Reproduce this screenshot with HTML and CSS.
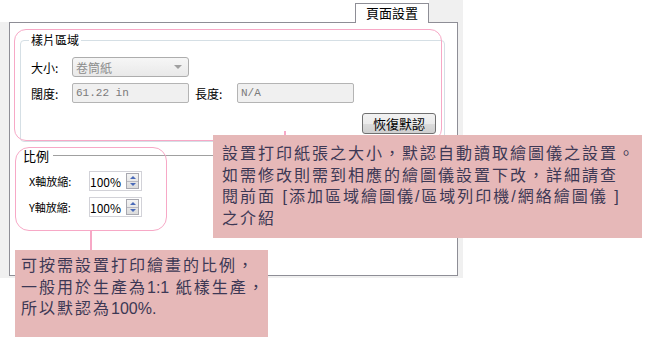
FILE: index.html
```html
<!DOCTYPE html>
<html lang="zh-Hant">
<head>
    <meta charset="UTF-8">
    <title>頁面設置</title>
    <link rel="stylesheet" href="styles.css">
</head>
<body>
    <div class="dialog">
        <div class="tabbar">
            <div class="tab-space"></div>
            <div class="tab">頁面設置</div>
            <div class="tab-rest"></div>
        </div>
        <div class="shell">
            <div class="panel">
                <div class="group">
                    <div class="group-title">樣片區域</div>
                    <div class="row first">
                        <span class="label">大小:</span>
                        <div class="combo">
                            <span>卷筒紙</span>
                            <span class="arrow"></span>
                        </div>
                    </div>
                    <div class="row">
                        <span class="label">闊度:</span>
                        <div class="field">61.22 in</div>
                        <span class="label second">長度:</span>
                        <div class="field">N/A</div>
                    </div>
                    <div class="row right">
                        <button class="btn">恢復默認</button>
                    </div>
                </div>

                <div class="scale">
                    <div class="scale-title">
                        <span>比例</span>
                        <span class="rule"></span>
                    </div>
                    <div class="row first scale-row">
                        <span class="label wide">X軸放縮:</span>
                        <div class="spin">
                            <span>100%</span>
                            <div class="spin-btns">
                                <span class="up"></span>
                                <span class="down"></span>
                            </div>
                        </div>
                    </div>
                    <div class="row scale-row">
                        <span class="label wide">Y軸放縮:</span>
                        <div class="spin">
                            <span>100%</span>
                            <div class="spin-btns">
                                <span class="up"></span>
                                <span class="down"></span>
                            </div>
                        </div>
                    </div>
                </div>
            </div>
        </div>
    </div>

    <!-- annotations drawn over the dialog -->
    <div class="mark mark-area"></div>
    <div class="mark mark-scale"></div>
    <div class="link link-scale"></div>
    <div class="link link-area"></div>

    <div class="note note-area">
        設置打印紙張之大小，默認自動讀取繪圖儀之設置。<br>
        如需修改則需到相應的繪圖儀設置下改，詳細請查<br>
        閱前面 [添加區域繪圖儀/區域列印機/網絡繪圖儀 ]<br>
        之介紹
    </div>
    <div class="note note-scale">
        可按需設置打印繪畫的比例，<br>
        一般用於生產為<span class="latin">1:1</span> 紙樣生產，<br>
        所以默認為<span class="latin">100%.</span>
    </div>
</body>
</html>
```
FILE: styles.css
```css
body {
    margin: 0;
    background: #fff;
    font-family: "Noto Sans CJK TC", "Liberation Sans", sans-serif;
    font-size: 12px;
    color: #000;
    width: 650px;
    height: 342px;
    position: relative;
    overflow: hidden;
}
.dialog {
    width: 463px;
}
.tabbar {
    display: flex;
    height: 22px;
}
.tab-space {
    width: 355px;
}
.tab {
    box-sizing: border-box;
    width: 74px;
    margin-top: 3px;
    border: 1px solid #8e8e96;
    border-bottom: none;
    background: #fff;
    text-align: center;
    font-size: 13px;
    line-height: 17px;
    position: relative;
    z-index: 1;
    height: 20px;
}
.tab-rest {
    flex: 1;
    background: #f0f0f0;
}
.shell {
    background: #f0f0f0;
    padding: 0 5px 2px 9px;
}
.panel {
    box-sizing: border-box;
    height: 254px;
    border: 1px solid #8e8e96;
    background: #fff;
    padding-top: 17px;
    padding-left: 10px;
}
.group {
    box-sizing: border-box;
    width: 425px;
    border: 1px solid #d5dfe5;
    border-radius: 4px;
    padding: 0 8px 8px 10px;
}
.group-title {
    width: max-content;
    height: 14px;
    background: #fff;
    padding: 0 2px;
    margin: -8px 0 0 -2px;
    line-height: 14px;
}
.row {
    display: flex;
    align-items: center;
    height: 20px;
    margin-top: 6px;
}
.row.first {
    margin-top: 10px;
}
.row.right {
    justify-content: flex-end;
    margin-top: 10px;
}
.label {
    width: 41px;
}
.label.second {
    width: 42px;
    margin-left: 6px;
}
.label.wide {
    width: 60px;
    font-size: 11px;
}
.combo {
    box-sizing: border-box;
    width: 117px;
    height: 20px;
    border: 1px solid #adadad;
    border-radius: 3px;
    background: linear-gradient(#f6f6f6, #e9e9e9);
    color: #8c8c8c;
    display: flex;
    align-items: center;
    justify-content: space-between;
    padding: 0 6px 0 3px;
}
.arrow {
    width: 0;
    height: 0;
    border-left: 4px solid transparent;
    border-right: 4px solid transparent;
    border-top: 4px solid #a0a0a0;
}
.field {
    box-sizing: border-box;
    width: 117px;
    height: 20px;
    border: 1px solid #b4b4b4;
    border-radius: 2px;
    background: #f0f0f0;
    color: #7a7a7a;
    font-family: "Liberation Mono", monospace;
    font-size: 11px;
    line-height: 18px;
    padding-left: 3px;
}
.btn {
    box-sizing: border-box;
    width: 74px;
    height: 21px;
    border: 1px solid #707070;
    border-radius: 3px;
    background: linear-gradient(#f2f2f2 0%, #ebebeb 50%, #dcdcdc 51%, #cfcfcf 100%);
    font-family: inherit;
    font-size: 13px;
    line-height: 17px;
    padding: 0;
    color: #000;
}
.scale {
    padding-left: 3px;
}
.scale-title {
    display: flex;
    align-items: center;
    margin-top: 7px;
    height: 14px;
    line-height: 14px;
    font-size: 13px;
}
.rule {
    flex: 1;
    margin: -2px 12px 0 4px;
    border-top: 1px solid #a0a0a0;
}
.scale-row {
    padding-left: 6px;
}
.scale-row.first {
    margin-top: 8px;
}
.spin {
    box-sizing: border-box;
    width: 53px;
    height: 20px;
    border: 1px solid #d2d2d8;
    display: flex;
    align-items: center;
    justify-content: space-between;
    padding: 0 2px 0 0;
    font-size: 12px;
}
.spin-btns {
    display: flex;
    flex-direction: column;
    border: 1px solid #a8a8b0;
    width: 11px;
    height: 14px;
    background: linear-gradient(#f4f4f4, #dcdcdc);
}
.spin-btns span {
    flex: 1;
    display: flex;
    align-items: center;
    justify-content: center;
}
.spin-btns .up::before {
    content: "";
    border-left: 3px solid transparent;
    border-right: 3px solid transparent;
    border-bottom: 3px solid #4a6ab8;
}
.spin-btns .down {
    border-top: 1px solid #b8b8c0;
}
.spin-btns .down::before {
    content: "";
    border-left: 3px solid transparent;
    border-right: 3px solid transparent;
    border-top: 3px solid #4a6ab8;
}

/* annotation overlay */
.mark {
    position: absolute;
    box-sizing: border-box;
    border: 1px solid #f7a8c6;
    border-radius: 12px;
}
.mark-area {
    left: 14px;
    top: 29px;
    width: 428px;
    height: 112px;
}
.mark-scale {
    left: 15px;
    top: 147px;
    width: 152px;
    height: 84px;
    border-radius: 14px;
}
.link {
    position: absolute;
    background: #f7a8c6;
    width: 2px;
}
.link-scale {
    left: 90px;
    top: 230px;
    height: 20px;
}
.link-area {
    left: 284px;
    top: 131px;
    height: 4px;
}
.note {
    position: absolute;
    box-sizing: border-box;
    background: #e6b8b8;
    color: #3d3855;
    font-family: "Liberation Sans", "Noto Sans CJK TC", sans-serif;
    font-size: 16px;
    letter-spacing: 2px;
    line-height: 21.5px;
    white-space: nowrap;
}
.note .latin {
    letter-spacing: 0;
}
.note-area {
    left: 213px;
    top: 135px;
    width: 429px;
    height: 103px;
    padding: 8px 0 0 9px;
}
.note-scale {
    left: 15px;
    top: 250px;
    width: 253px;
    height: 87px;
    padding: 5px 0 0 6px;
}
```
